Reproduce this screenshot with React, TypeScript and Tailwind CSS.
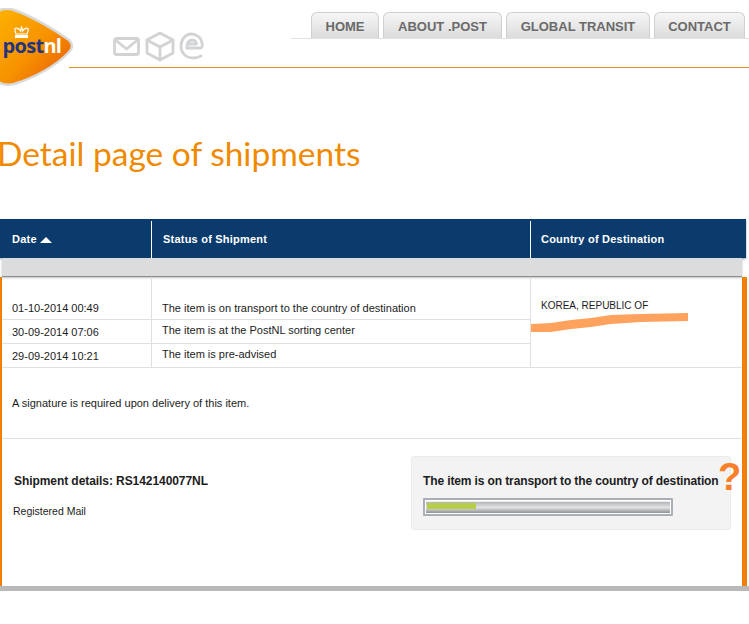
const tabs = [
    { label: "HOME", width: "w-[68px]" },
    { label: "ABOUT .POST", width: "w-[119px]" },
    { label: "GLOBAL TRANSIT", width: "w-[144px]" },
    { label: "CONTACT", width: "w-[91px]" },
];

const events = [
    { date: "01-10-2014 00:49", status: "The item is on transport to the country of destination", row: "h-[43px]", datePad: "pt-[23px]", statusPad: "pt-[23px]" },
    { date: "30-09-2014 07:06", status: "The item is at the PostNL sorting center", row: "h-[24px]", datePad: "pt-[4px]", statusPad: "pt-[2px]" },
    { date: "29-09-2014 10:21", status: "The item is pre-advised", row: "h-[23px]", datePad: "pt-[4px]", statusPad: "pt-[2px]" },
];

const Logo = () => (
    <svg className="absolute left-0 top-[8px]" width="74" height="78" viewBox="0 0 74 78">
        <defs>
            <linearGradient id="logoFill" x1="0" y1="0" x2="1" y2="0.9">
                <stop offset="0" stopColor="#fdb400" />
                <stop offset="0.55" stopColor="#f79200" />
                <stop offset="1" stopColor="#e85a08" />
            </linearGradient>
        </defs>
        <path
            d="M-6 8 C-2 1 6 -1 14 2 C34 9 58 24 69 32 C73 36 73 40 69 44 C56 58 34 70 14 76 C4 78 -3 75 -6 68 Z"
            fill="url(#logoFill)"
            stroke="#d9d9d9"
            strokeWidth="2.5"
        />
        <path d="M16 26 C15 23 14.5 22 15 20.5 C17 19.5 19 20.5 20.5 23 C21 21 21 20 21.5 19 C22 20 22.5 21 22.5 23 C24 20.5 26 19.5 28 20.5 C28.5 22 28 24 27 26 Z" fill="none" stroke="#fff" strokeWidth="1.2" />
        <rect x="15" y="27" width="13" height="3" fill="#fff" />
        <text x="2.5" y="45" fontFamily="Open Sans, sans-serif" fontWeight="700" fontSize="20" letterSpacing="-0.7">
            <tspan fill="#23347f">post</tspan>
            <tspan fill="#ffffff">nl</tspan>
        </text>
    </svg>
);

const ServiceIcons = () => (
    <svg className="absolute left-[112px] top-[31px]" width="94" height="31" viewBox="0 0 94 31" fill="none" stroke="#d2d3d5" strokeWidth="2.8" strokeLinejoin="round" strokeLinecap="round">
        <rect x="2.5" y="7.5" width="24" height="16" rx="2" />
        <path d="M3.5 9 L14.5 18 L25.5 9" />
        <path d="M48 2 L61 9 V22 L48 29 L35 22 V9 Z" />
        <path d="M35 9 L48 16 L61 9 M48 16 V29" />
        <path d="M75 17 H88 C90.5 17 90.5 15 90 12 C89 6 84 3 79.5 3 C73 3 69 9 69 15 C69 22 74 27 81 27 C84 27 87 26 89 25" />
        <path d="M75 17 C74.5 12 77 9 80 9 C83 9 84.5 11 84.5 13 H76" />
    </svg>
);

const ProgressBar = () => (
    <div className="mt-[10px] h-[18px] w-[250px] rounded-[1px] border-[2px] border-[#a9afb6] bg-white p-[1px]">
        <div className="h-full w-full border-t-[1px] border-[#eceded] bg-gradient-to-b from-[#b2b5b8] via-[#e2e3e4] to-[#8f9295] pt-[1px] pl-[1px]">
            <div className="h-[6px] w-[49px] bg-[#b5cf4b]" />
        </div>
    </div>
);

const App = () => {
    return (
        <div className="relative h-[624px] w-[749px] overflow-hidden bg-white font-['Liberation_Sans',Arial,sans-serif] text-[11px] text-[#1c1c1c]">
            <header className="h-[68px] pl-[69px]">
                <div className="h-[68px] border-b border-[#dd8f20] pl-[222px]">
                    <nav className="flex h-[39px] items-end gap-[4px] border-b border-[#e3e3e3] pl-[20px]">
                        {tabs.map((tab) => (
                            <a
                                key={tab.label}
                                className={`${tab.width} flex h-[26px] items-center justify-center rounded-t-[6px] border border-b-0 border-[#cfcfcf] bg-gradient-to-b from-[#f6f6f6] to-[#dcdcdc] pt-[2px] text-[13px] font-bold text-[#6a6a6a]`}
                            >
                                {tab.label}
                            </a>
                        ))}
                    </nav>
                </div>
            </header>

            <Logo />
            <ServiceIcons />

            <h1 className="mt-[60px] -ml-[3px] h-[91px] font-['Lato',sans-serif] text-[33.5px] leading-[50px] text-[#f08a00]">
                Detail page of shipments
            </h1>

            <div className="flex h-[39px] w-[746px] border-t-[2px] border-[#0b3b6d] bg-[#0b3b6d] text-[11px] font-bold tracking-[0.22px] text-white shadow-[0_1px_2px_rgba(0,0,0,0.4)]">
                <div className="flex w-[152px] items-center gap-[3px] border-r border-white pl-[12px]">
                    Date
                    <span className="h-0 w-0 border-x-[6px] border-b-[6px] border-x-transparent border-b-white" />
                </div>
                <div className="flex w-[379px] items-center border-r border-white pl-[11px]">Status of Shipment</div>
                <div className="flex items-center pl-[10px]">Country of Destination</div>
            </div>

            <div className="ml-[2px] h-[19px] w-[740px] border-b-[1px] border-[#8c8c8c] bg-[#dcdcdc] shadow-[0_1px_2px_rgba(0,0,0,0.25)]" />

            <main className="h-[309px] w-[747px] border-l-[2px] border-r-[5px] border-[#f17f0a]">
                <div className="flex border-b border-[#e0e0e0]">
                    <div className="w-[529px] border-r border-[#e0e0e0]">
                        {events.map((event, i) => (
                            <div key={event.date} className={`flex ${event.row} ${i < 2 ? "border-b border-[#e0e0e0]" : ""}`}>
                                <div className={`w-[150px] border-r border-[#e0e0e0] pl-[10px] ${event.datePad}`}>{event.date}</div>
                                <div className={`pl-[10px] ${event.statusPad}`}>{event.status}</div>
                            </div>
                        ))}
                    </div>
                    <div className="pt-[21px] pl-[10px] text-[10px]">KOREA, REPUBLIC OF</div>
                </div>

                <div className="h-[71px] border-b border-[#e0e0e0] pt-[27px] pl-[10px]">
                    A signature is required upon delivery of this item.
                </div>

                <div className="flex justify-between pt-[17px] pr-[11px]">
                    <div>
                        <p className="mt-[16px] ml-[12px] text-[12px] font-bold tracking-[-0.07px]">Shipment details: RS142140077NL</p>
                        <p className="mt-[14px] ml-[11px] text-[10.5px]">Registered Mail</p>
                    </div>
                    <div className="h-[74px] w-[320px] rounded-[3px] border border-[#ebebeb] bg-[#f3f3f4] pt-[17px] pl-[11px]">
                        <p className="text-[12px] leading-[14px] font-bold tracking-[-0.12px]">The item is on transport to the country of destination</p>
                        <ProgressBar />
                    </div>
                </div>
            </main>

            <div className="h-[5px] w-[749px] bg-[#b9b9b9]" />

            {/* redaction stroke over the address */}
            <svg className="absolute left-[531px] top-[312px]" width="158" height="21" viewBox="0 0 158 21">
                <path d="M0 12 L20 11 L40 8 L60 6 L80 3 L110 2 L157 1 V9 L110 10 L80 12 L60 15 L40 17 L20 20 L0 20 Z" fill="#ffa25e" />
            </svg>

            <span className="absolute left-[718px] top-[457px] text-[38px] leading-[40px] font-bold text-[#f97f2a]">?</span>
        </div>
    );
};

export default App;
